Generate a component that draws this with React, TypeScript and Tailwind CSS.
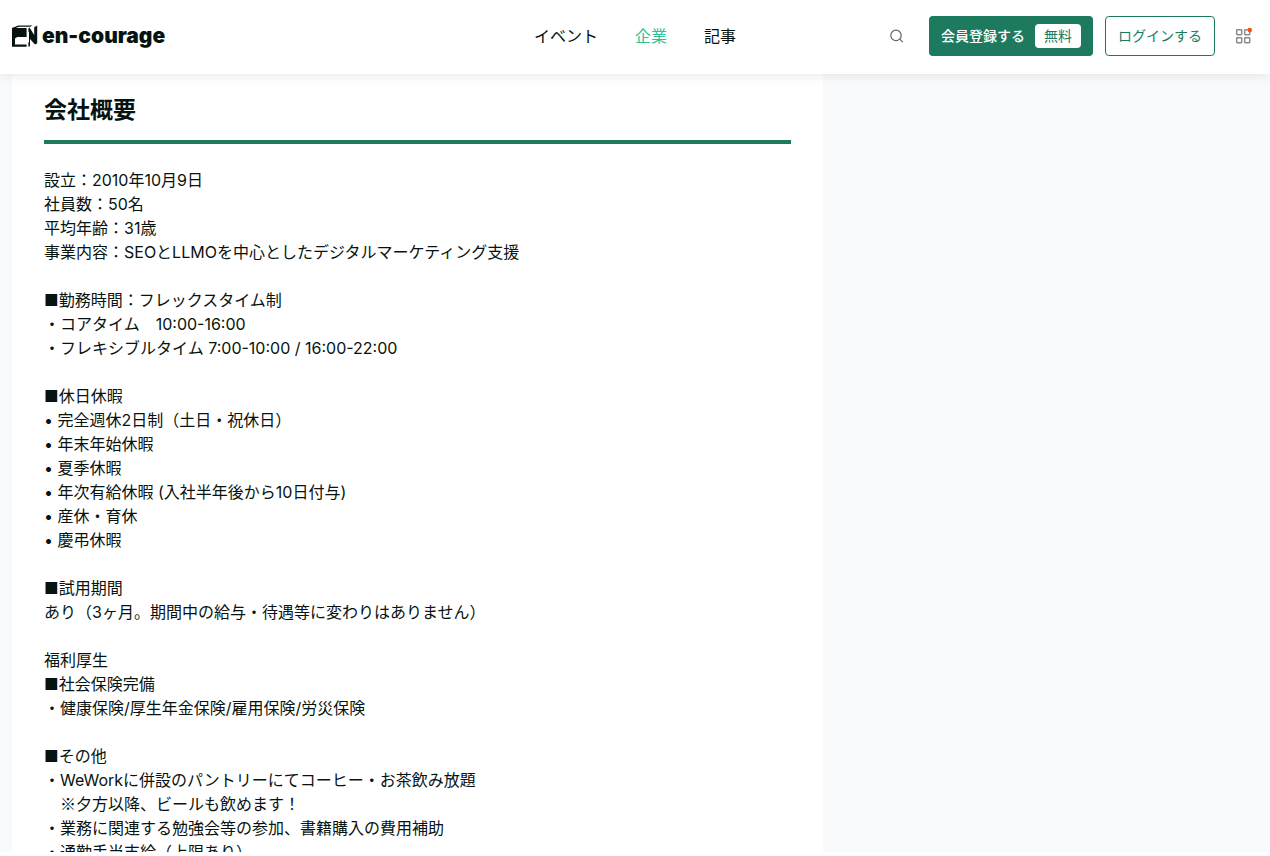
import { ReactNode } from 'react';

const navItems = [
  { label: 'イベント', href: '#events', active: false },
  { label: '企業', href: '#companies', active: true },
  { label: '記事', href: '#articles', active: false },
];

const overview = `設立：2010年10月9日
社員数：50名
平均年齢：31歳
事業内容：SEOとLLMOを中心としたデジタルマーケティング支援

■勤務時間：フレックスタイム制
・コアタイム　10:00-16:00
・フレキシブルタイム 7:00-10:00 / 16:00-22:00

■休日休暇
• 完全週休2日制（土日・祝休日）
• 年末年始休暇
• 夏季休暇
• 年次有給休暇 (入社半年後から10日付与)
• 産休・育休
• 慶弔休暇

■試用期間
あり（3ヶ月。期間中の給与・待遇等に変わりはありません）

福利厚生
■社会保険完備
・健康保険/厚生年金保険/雇用保険/労災保険

■その他
・WeWorkに併設のパントリーにてコーヒー・お茶飲み放題
　※夕方以降、ビールも飲めます！
・業務に関連する勉強会等の参加、書籍購入の費用補助
・通勤手当支給（上限あり）`;

function Logo() {
  return (
    <a href="#top" className="flex items-center gap-1 text-[#07130f]">
      <svg width="26" height="24" viewBox="0 0 26 24" fill="currentColor" aria-hidden="true">
        <path d="M0 4 6.4 1.4h14.2l-2.4 1.4H7L3.8 4z" />
        <path d="M0 4h14.6v9H5.2L3 14.4v6.2h11.6v2.2H0z" />
        <path d="M16.4 4.6 18 3.6v18.6l-1.6.6v-4.2l.6-.6V8l-.6-.4z" />
        <path d="M18 4.2 22.2 11V3.2l3-1.8v17.8l-2.2 1.4L18 15z" />
      </svg>
      <span className="text-[21px] leading-6 font-black">en-courage</span>
    </a>
  );
}

function Header() {
  return (
    <header className="relative z-10 grid shrink-0 grid-cols-[1fr_auto_1fr] items-center bg-white px-3 pt-4 pb-[18px] shadow-[0_0_12px_rgba(0,0,0,0.12)]">
      <Logo />
      <nav className="flex gap-[37px]">
        {navItems.map((item) => (
          <a key={item.label} href={item.href} className={item.active ? 'text-[#2fc194]' : 'text-[#07130f]'}>
            {item.label}
          </a>
        ))}
      </nav>
      <div className="flex items-center justify-end gap-3">
        <button type="button" aria-label="検索" className="mr-3 text-[#666]">
          <svg width="16" height="16" viewBox="0 0 16 16" fill="none" stroke="currentColor" strokeWidth="1.2">
            <circle cx="7" cy="7.4" r="5.2" />
            <path d="m10.8 11.2 3 3" />
          </svg>
        </button>
        <button type="button" className="flex h-10 items-center gap-2.5 rounded bg-[#1e7a5f] px-3 text-sm font-medium text-white">
          会員登録する
          <span className="flex h-6 items-center rounded bg-white px-[9px] font-normal text-[#1e7a5f]">無料</span>
        </button>
        <button type="button" className="h-10 rounded border border-[#1e7a5f] px-3 text-sm font-normal text-[#1e7a5f]">
          ログインする
        </button>
        <button type="button" aria-label="メニュー" className="mr-[5px] ml-2 text-[#8b8b8b]">
          <svg width="18" height="18" viewBox="0 0 18 18" fill="none" stroke="currentColor" strokeWidth="1.5">
            <rect x="1.7" y="2.7" width="5" height="5" rx="0.6" />
            <rect x="9.7" y="2.7" width="5" height="5" rx="0.6" />
            <rect x="1.7" y="10.7" width="5" height="5" rx="0.6" />
            <rect x="9.7" y="10.7" width="5" height="5" rx="0.6" />
            <circle cx="14.8" cy="3" r="2.2" fill="#fa4d0a" stroke="none" />
          </svg>
        </button>
      </div>
    </header>
  );
}

function Section({ title, children }: { title: string; children: ReactNode }) {
  return (
    <section className="min-w-0 flex-1 bg-white px-8 pt-[18px]">
      <h2 className="border-b-4 border-[#1e7a5f] pb-3 text-[23px] leading-9 font-bold">{title}</h2>
      <div className="mt-6 text-base leading-6 whitespace-pre-wrap">{children}</div>
    </section>
  );
}

// Inter's own ※ is narrower than a full-width character
function Line({ text }: { text: string }) {
  const [before, after] = text.split('※');
  return (
    <p className="min-h-6">
      {before}
      {after !== undefined && (
        <>
          <span className="font-['Noto_Sans_CJK_JP',sans-serif] leading-none">※</span>
          {after}
        </>
      )}
    </p>
  );
}

export default function App() {
  return (
    <div
      lang="ja"
      className="flex h-screen flex-col bg-white pb-1 font-['Inter','Noto_Sans_CJK_JP',sans-serif] text-[#07130f]"
    >
      <Header />
      <main className="flex min-h-0 flex-1 gap-[33px] overflow-hidden bg-[#f9fafc] px-3">
        <Section title="会社概要">
          {overview.split('\n').map((line, i) => (
            <Line key={i} text={line} />
          ))}
        </Section>
        <aside className="w-[402px] shrink-0" />
      </main>
    </div>
  );
}
